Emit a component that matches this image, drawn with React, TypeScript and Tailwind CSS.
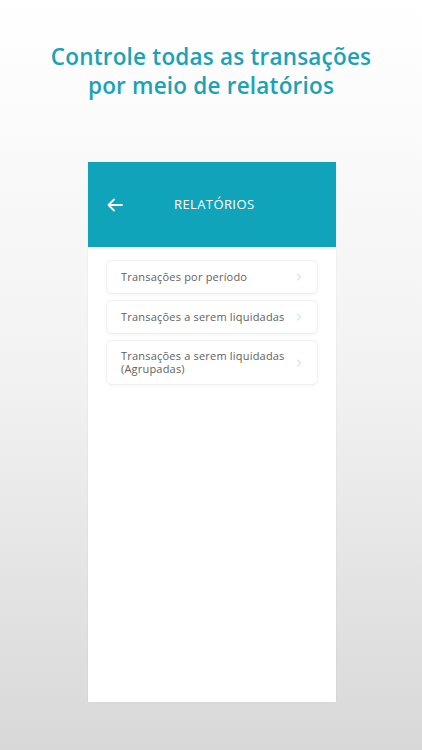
import { ChevronRight } from "lucide-react";

const ITEMS = [
  "Transações por período",
  "Transações a serem liquidadas",
  "Transações a serem liquidadas (Agrupadas)",
];

function ArrowLeft() {
  return (
    <svg width="16" height="14" viewBox="0 0 16 14" fill="none" stroke="white" strokeWidth="1.8" strokeLinecap="round" strokeLinejoin="round">
      <path d="M15 7H1.5M7 1.5 1.5 7 7 12.5" />
    </svg>
  );
}

export default function App() {
  return (
    <div
      className="flex h-[750px] w-[422px] flex-col items-center bg-gradient-to-b from-white via-[#f2f2f2] to-[#d8d8d8]"
      style={{ fontFamily: '"Open Sans", "Liberation Sans", sans-serif' }}
    >
      <h1 className="mt-[42px] text-center text-[22.5px] font-semibold leading-[29px] tracking-[0.2px] text-[#1aa2b6]">
        Controle todas as transações
        <br />
        por meio de relatórios
      </h1>

      <div className="ml-[2px] mt-[62px] flex h-[540px] w-[248px] flex-col bg-white shadow-[0_0_2px_rgba(0,0,0,0.08)]">
        <div className="flex h-[85px] items-center bg-[#10a4bb] px-[19px]">
          <ArrowLeft />
          <span className="ml-[51px] text-[13px] tracking-[0.4px] text-white">RELATÓRIOS</span>
        </div>

        <div className="flex flex-col gap-[6px] px-[18px] pt-[13px]">
          {ITEMS.map((label) => (
            <div
              key={label}
              className="flex min-h-[34px] items-center justify-between rounded-[6px] border border-[#f0f0f0] bg-white py-[9px] pl-[14px] pr-[12px] shadow-[0_1px_3px_rgba(0,0,0,0.04)]"
            >
              <span className="max-w-[175px] text-[11px] font-medium leading-[12.5px] tracking-[0.2px] text-[#5f5f5f]">{label}</span>
              <ChevronRight size={12} strokeWidth={1.5} className="shrink-0 text-[#7fd6d0]" />
            </div>
          ))}
        </div>
      </div>
    </div>
  );
}
